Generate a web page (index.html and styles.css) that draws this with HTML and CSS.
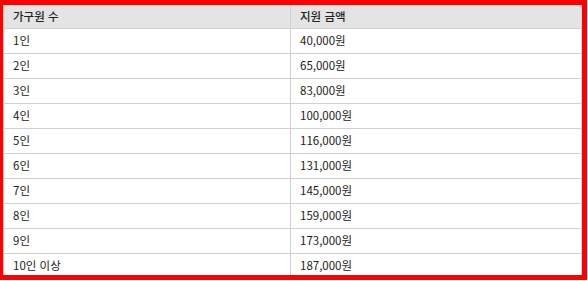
FILE: index.html
```html
<!DOCTYPE html>
<html lang="ko">
<head>
<meta charset="utf-8">
<link rel="stylesheet" href="styles.css">
</head>
<body>
<div class="frame">
  <table class="tbl">
    <colgroup><col class="c1"><col class="c2"></colgroup>
    <thead>
      <tr><th>가구원 수</th><th>지원 금액</th></tr>
    </thead>
    <tbody>
      <tr><td>1인</td><td>40,000원</td></tr>
      <tr><td>2인</td><td>65,000원</td></tr>
      <tr><td>3인</td><td>83,000원</td></tr>
      <tr><td>4인</td><td>100,000원</td></tr>
      <tr><td>5인</td><td>116,000원</td></tr>
      <tr><td>6인</td><td>131,000원</td></tr>
      <tr><td>7인</td><td>145,000원</td></tr>
      <tr><td>8인</td><td>159,000원</td></tr>
      <tr><td>9인</td><td>173,000원</td></tr>
      <tr><td>10인 이상</td><td>187,000원</td></tr>
    </tbody>
  </table>
</div>
</body>
</html>
```

FILE: styles.css
```css
html, body {
  margin: 0;
  padding: 0;
  background: #fff;
}
.frame {
  margin-left: -2px;
  width: 579px;
  height: 270px;
  border: 5px solid #ff0000;
  overflow: hidden;
}
.tbl {
  width: 100%;
  table-layout: fixed;
  border-collapse: collapse;
  font-family: "Noto Sans CJK KR", "Noto Sans", sans-serif;
  font-size: 11.5px;
  color: #222;
}
.c1 { width: 287px; }
.tbl th, .tbl td {
  text-align: left;
  padding: 0 9px;
  border: 1px solid #d0d0d0;
  line-height: 23px;
  height: 25px;
  box-sizing: border-box;
}
.tbl th {
  background: #e4e4e4;
  font-weight: 500;
  height: 23px;
  line-height: 22px;
  border-top: 0;
}
.tbl td {
  font-weight: 400;
}
```
